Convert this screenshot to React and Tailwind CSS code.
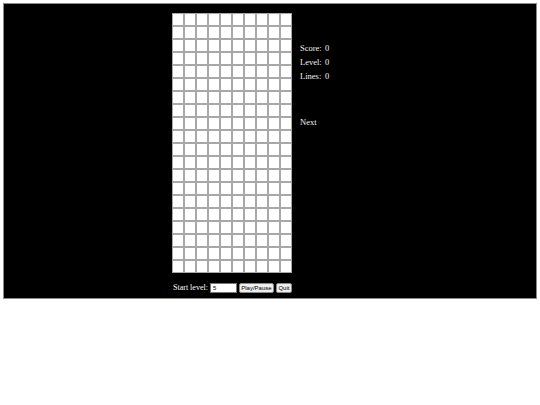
const COLS = 10;
const ROWS = 20;

const cells = Array.from({ length: COLS * ROWS });

const STATS = [
  { label: "Score:", value: "0" },
  { label: "Level:", value: "0" },
  { label: "Lines:", value: "0" },
];

export default function App() {
  return (
    <div className="w-[540px] h-[405px] bg-white pt-[3px] pl-[3px]" style={{ fontFamily: '"Liberation Serif", "Times New Roman", serif' }}>
      <div className="w-[534px] h-[296px] bg-black border border-[#8a8a8a] flex flex-col pl-[168px] pt-[9px] text-white">
        <div className="flex">
          {/* ── Board ─────────────────────────── */}
          <div className="grid grid-cols-[repeat(10,12px)] grid-rows-[repeat(20,13px)] w-[120px] h-[260px]">
            {cells.map((_, i) => (
              <div key={i} className="bg-white border border-[#a8a8a8]" />
            ))}
          </div>

          {/* ── Side panel ────────────────────── */}
          <div className="ml-[8px] pt-[28px] text-[8.5px] leading-[14px] text-[#f2f2f2]">
            {STATS.map((s) => (
              <div key={s.label} className="flex">
                <span className="w-[25px]">{s.label}</span>
                <span>{s.value}</span>
              </div>
            ))}
            <div className="mt-[32px]">Next</div>
          </div>
        </div>

        {/* ── Controls ──────────────────────── */}
        <div className="flex items-center mt-[9px] h-[11px] text-[8px]">
          <span className="ml-[1px] mr-[2px]">Start level:</span>
          <input
            defaultValue="5"
            className="w-[27px] h-[10px] bg-white text-black border border-[#777] text-[6px] px-[2px] outline-none"
            style={{ fontFamily: '"Liberation Sans", Arial, sans-serif' }}
          />
          <button
            className="ml-[2px] w-[35px] h-[10px] bg-[#efefef] text-black border border-[#888] rounded-[2px] text-[6px] leading-none"
            style={{ fontFamily: '"Liberation Sans", Arial, sans-serif' }}
          >
            Play/Pause
          </button>
          <button
            className="ml-[2px] w-[16px] h-[10px] bg-[#efefef] text-black border border-[#888] rounded-[2px] text-[6px] leading-none"
            style={{ fontFamily: '"Liberation Sans", Arial, sans-serif' }}
          >
            Quit
          </button>
        </div>
      </div>
    </div>
  );
}
